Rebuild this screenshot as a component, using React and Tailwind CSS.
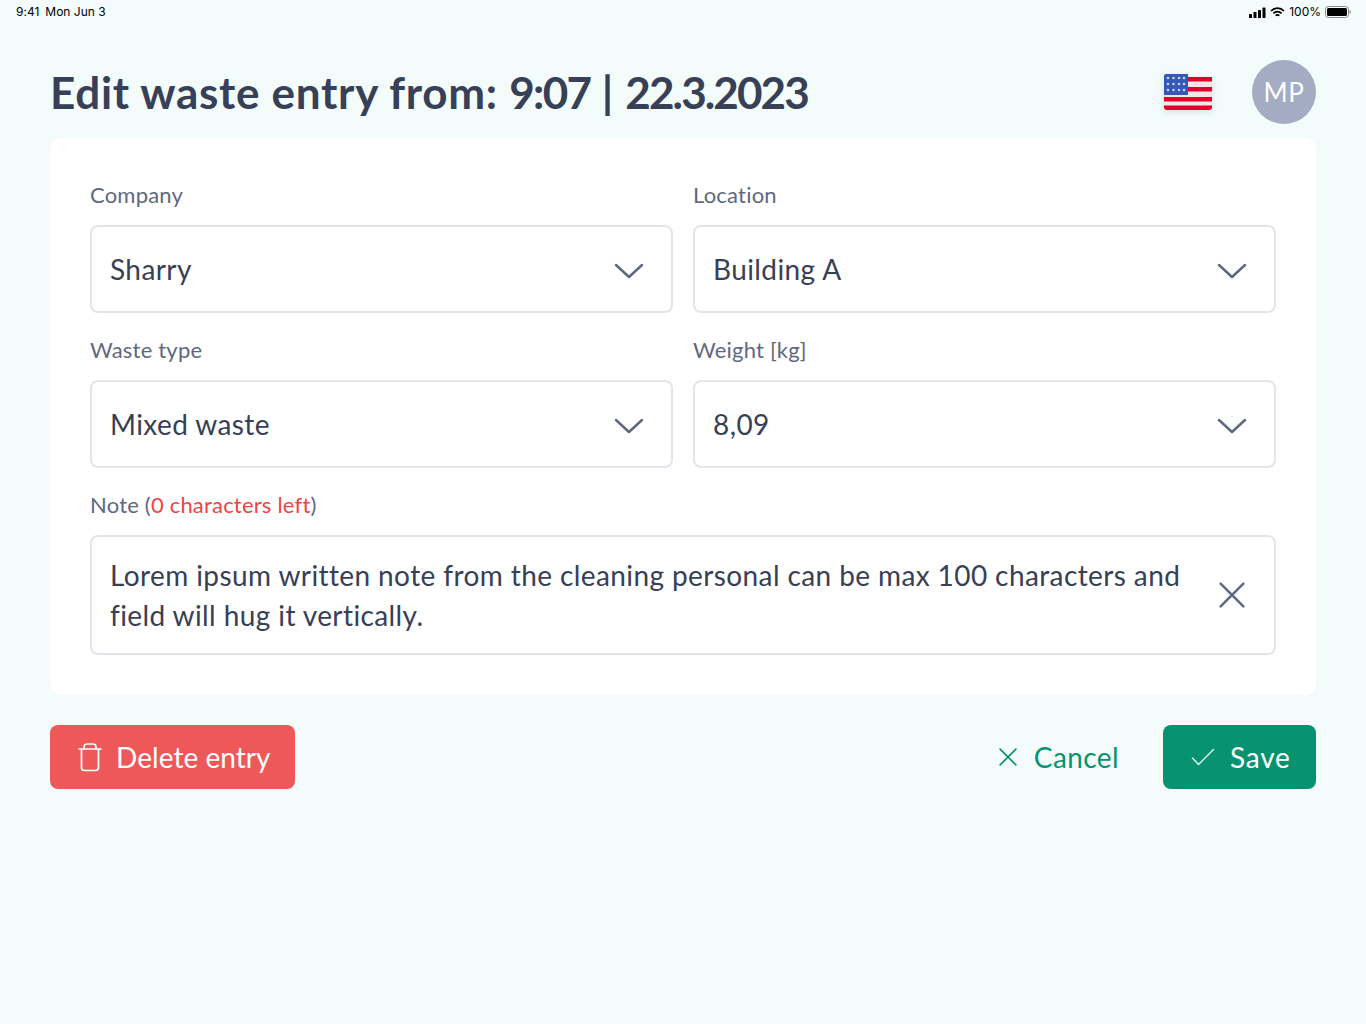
import React from 'react';

const font = "font-['Lato','Noto_Sans',sans-serif] [font-variant-ligatures:none]";

function Flag() {
    return (
        <svg width="48" height="36" viewBox="0 0 48 36" className="drop-shadow-[0_2px_3px_rgba(55,65,81,0.15)]">
            <rect x="0" y="2.5" width="48" height="33.5" rx="3" fill="#f3e6ea" />
            <rect x="0" y="3" width="48" height="4.5" fill="#e0002b" />
            <rect x="0" y="13" width="48" height="4.5" fill="#e0002b" />
            <rect x="0" y="23" width="48" height="4.5" fill="#e0002b" />
            <path d="M0 31.5h48V33a3 3 0 0 1-3 3H3a3 3 0 0 1-3-3z" fill="#e0002b" />
            <path d="M2 0h22v21H0V2a2 2 0 0 1 2-2z" fill="#3558b8" />
            {[4, 10, 16].map((y) =>
                [4, 9.5, 15, 20].map((x) => <circle key={`${x}-${y}`} cx={x} cy={y} r="1.3" fill="#c9d3f0" />)
            )}
        </svg>
    );
}

function StatusBar() {
    return (
        <div className="flex h-6 items-center justify-between pl-4 pr-[15px] font-['Inter',sans-serif] text-[12px] text-black">
            <div className="flex gap-[6px]">
                <span>9:41</span>
                <span>Mon Jun 3</span>
            </div>
            <div className="flex items-center gap-[4px]">
                <svg width="17" height="11" viewBox="0 0 17 11" fill="#000">
                    <rect x="0" y="7" width="3" height="4" rx="0.6" />
                    <rect x="4.5" y="5" width="3" height="6" rx="0.6" />
                    <rect x="9" y="3" width="3" height="8" rx="0.6" />
                    <rect x="13.5" y="0.5" width="3" height="10.5" rx="0.6" />
                </svg>
                <svg width="15" height="11" viewBox="0 0 15 11" fill="none" stroke="#000" strokeWidth="1.7">
                    <path d="M1 4a9 9 0 0 1 13 0" />
                    <path d="M3.4 6.4a5.6 5.6 0 0 1 8.2 0" />
                    <path d="M5.7 8.6a2.4 2.4 0 0 1 3.6 0" />
                </svg>
                <span>100%</span>
                <svg width="26" height="12" viewBox="0 0 26 12" fill="none">
                    <rect x="0.5" y="0.5" width="23" height="11" rx="3" stroke="#8a8a8a" />
                    <rect x="2" y="2" width="20" height="8" rx="1.5" fill="#000" />
                    <path d="M24.5 4v4c.8-.3 1.3-1.1 1.3-2s-.5-1.7-1.3-2z" fill="#8a8a8a" />
                </svg>
            </div>
        </div>
    );
}

function Chevron() {
    return (
        <svg width="30" height="16" viewBox="0 0 30 16" fill="none" stroke="#5f6880" strokeWidth="2.5" strokeLinecap="round" strokeLinejoin="round" className="mt-[3px]">
            <path d="M2 2l13 12L28 2" />
        </svg>
    );
}

function Cross({ size, color, width }) {
    return (
        <svg width={size} height={size} viewBox="0 0 24 24" fill="none" stroke={color} strokeWidth={width} strokeLinecap="round">
            <path d="M1.5 1.5l21 21M22.5 1.5l-21 21" />
        </svg>
    );
}

function Field({ label, value }) {
    return (
        <div>
            <div className="mb-[18px] h-6 text-[22px] leading-6 tracking-[0.2px] text-[#5f6880]">{label}</div>
            <div className="flex h-[88px] items-center justify-between rounded-lg border-2 border-[#e2e6ec] pl-[18px] pr-[27px] text-[28px] tracking-[0.4px] text-[#374056]">
                <span>{value}</span>
                <Chevron />
            </div>
        </div>
    );
}

export default function App() {
    return (
        <div className={`min-h-[1024px] bg-[#f3fcfa] ${font}`}>
            <StatusBar />

            <div className="px-[50px]">
                <div className="flex h-[114px] items-center justify-between pb-[14px] pt-[36px]">
                    <h1 className="text-[44px] font-bold leading-none tracking-[0.7px] text-[#374056]">
                        Edit waste entry from: <span className="tracking-[-1.7px]">9:07</span> | <span className="tracking-[-1.9px]">22.3.2023</span>
                    </h1>
                    <div className="flex items-center gap-10">
                        <Flag />
                        <div className="flex h-16 w-16 items-center justify-center rounded-full bg-[#a4acc4] text-[26px] tracking-[0.5px] text-white">MP</div>
                    </div>
                </div>

                <div className="rounded-xl bg-white px-10 pb-10 pt-[45px]">
                    <div className="grid grid-cols-2 gap-x-5 gap-y-[25px]">
                        <Field label="Company" value="Sharry" />
                        <Field label="Location" value="Building A" />
                        <Field label="Waste type" value="Mixed waste" />
                        <Field label="Weight [kg]" value="8,09" />
                    </div>
                    <div className="mt-[25px]">
                        <div className="mb-[18px] h-6 text-[22px] leading-6 tracking-[0.2px] text-[#5f6880]">
                            Note (<span className="text-[#ef4444]">0 characters left</span>)
                        </div>
                        <div className="flex h-[120px] items-center justify-between rounded-lg border-2 border-[#e2e6ec] pl-[18px] pr-[29px] text-[28px] leading-10 tracking-[0.4px] text-[#374056]">
                            <span className="w-[1090px]">
                                Lorem ipsum written note from the cleaning personal can be max 100 characters and<br />field will hug it vertically.
                            </span>
                            <Cross size={26} color="#5f6880" width={2.3} />
                        </div>
                    </div>
                </div>

                <div className="mt-[30px] flex items-center justify-between">
                    <button className="flex h-16 w-[245px] items-center gap-[14px] rounded-lg bg-[#ef5858] pl-[28px] text-[28px] tracking-[0.05px] text-white">
                        <svg width="24" height="29" viewBox="0 0 24 29" fill="none" stroke="#fff" strokeWidth="1.7" strokeLinecap="round" strokeLinejoin="round">
                            <path d="M1 6h22" />
                            <path d="M6 6V4a3 3 0 0 1 3-3h6a3 3 0 0 1 3 3v2" />
                            <path d="M3.5 6v18.5a3 3 0 0 0 3 3h11a3 3 0 0 0 3-3V6" />
                        </svg>
                        Delete entry
                    </button>
                    <div className="flex items-center gap-[44px]">
                        <button className="flex items-center gap-[17px] text-[28px] tracking-[0.4px] text-[#089370]">
                            <Cross size={18} color="#089370" width={2.2} />
                            Cancel
                        </button>
                        <button className="flex h-16 w-[153px] items-center gap-[15px] rounded-lg bg-[#089370] pl-[28px] text-[28px] tracking-[0.8px] text-white">
                            <svg width="24" height="18" viewBox="0 0 24 18" fill="none" stroke="#fff" strokeOpacity="0.85" strokeWidth="1.5" strokeLinecap="round" strokeLinejoin="round">
                                <path d="M1.5 10l6 6.5L22.5 1.5" />
                            </svg>
                            Save
                        </button>
                    </div>
                </div>
            </div>
        </div>
    );
}
